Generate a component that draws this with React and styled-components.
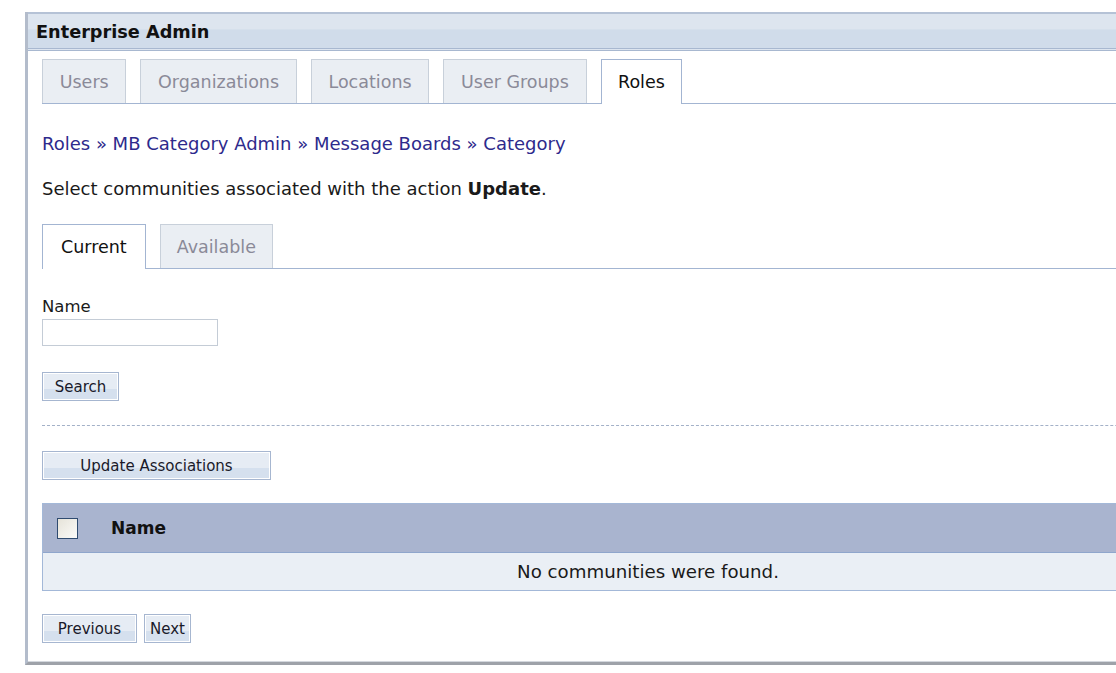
import React from 'react';
import styled, { createGlobalStyle } from 'styled-components';

const GlobalStyle = createGlobalStyle`
  body {
    margin: 0;
    overflow: hidden;
    background: #fff;
    font-family: 'DejaVu Sans', Verdana, sans-serif;
    color: #1a1a1a;
  }
`;

const Page = styled.div`
  padding: 12px 0 0 25px;
  width: 1400px;
`;

const Panel = styled.div`
  width: 1250px;
  border-left: 3px solid #b3bccb;
  border-bottom: 3px solid #9ea2a9;
  background: #fff;
`;

const Header = styled.div`
  height: 34px;
  display: flex;
  align-items: center;
  padding: 1px 0 0 8px;
  box-sizing: border-box;
  border-top: 2px solid #b5c2d6;
  border-bottom: 3px double #a8b8d0;
  background: linear-gradient(#dde5ef 0%, #dde5ef 45%, #d0dcea 46%, #d0dcea 100%);
  font-weight: bold;
  font-size: 17.7px;
  color: #111;
  height: 39px;
`;

const Body = styled.div`
  padding: 8px 0 18px 14px;
  border-bottom: 1px solid #d4d8de;
`;

const TabBar = styled.div`
  display: flex;
  gap: ${(p) => p.gap}px;
  align-items: flex-end;
  border-bottom: 1px solid #a3b5d2;
  margin-bottom: ${(p) => p.below}px;
`;

const Tab = styled.div`
  height: ${(p) => (p.active ? 45 : 44)}px;
  padding: 0 ${(p) => p.pad}px;
  display: flex;
  align-items: center;
  box-sizing: border-box;
  font-size: 17.5px;
  color: ${(p) => (p.active ? '#111' : '#8a8a98')};
  background: ${(p) => (p.active ? '#fff' : '#eaeef3')};
  border: 1px solid ${(p) => (p.active ? '#a3b5d2' : '#c8d0da')};
  border-bottom: none;
  margin-bottom: ${(p) => (p.active ? -1 : 0)}px;
`;

const Crumbs = styled.div`
  font-size: 18px;
  color: #2e2a8c;
  margin-bottom: 24px;
`;

const Intro = styled.div`
  font-size: 18px;
  margin-bottom: 25px;
  b {
    font-weight: bold;
  }
`;

const Label = styled.div`
  font-size: 16.5px;
  margin-bottom: 3px;
`;

const TextInput = styled.input`
  display: block;
  width: 176px;
  height: 27px;
  box-sizing: border-box;
  border: 1px solid #c4ccd6;
  margin: 0 0 26px;
`;

const Button = styled.button`
  display: block;
  width: ${(p) => p.w}px;
  height: 29px;
  padding: 0;
  border: 1px solid #a6b6d0;
  box-shadow: inset 0 0 0 1px #fff;
  background: linear-gradient(#e6ecf4 0%, #e6ecf4 60%, #d5e0ee 61%, #d5e0ee 100%);
  font-family: 'DejaVu Sans', Verdana, sans-serif;
  font-size: 15px;
  color: #1a1a2a;
`;

const Dashed = styled.div`
  border-top: 1px dashed #a3b1c8;
  margin: 24px 0 25px;
`;

const Table = styled.div`
  margin-top: 23px;
  width: 1210px;
  border: 1px solid #a3b8d8;
`;

const HeadRow = styled.div`
  height: 48px;
  display: flex;
  align-items: center;
  background: #a9b4cf;
  border-bottom: 1px solid #8fa6cc;
  font-weight: bold;
  font-size: 17px;
  color: #111;
`;

const Check = styled.span`
  width: 19px;
  height: 19px;
  margin: 0 33px 0 14px;
  border: 1px solid #2f4b70;
  background: linear-gradient(135deg, #e6e3d9, #fbfbf9);
`;

const EmptyRow = styled.div`
  height: 37px;
  display: flex;
  align-items: center;
  justify-content: center;
  background: #eaeff5;
  font-size: 18.2px;
`;

const Pager = styled.div`
  display: flex;
  gap: 7px;
  margin-top: 23px;
`;

export default function App() {
  const top = ['Users', 'Organizations', 'Locations', 'User Groups'];
  return (
    <Page>
      <GlobalStyle />
      <Panel>
        <Header>Enterprise Admin</Header>
        <Body>
          <TabBar gap={14} below={29}>
            {top.map((t) => (
              <Tab key={t} pad={16.7}>
                {t}
              </Tab>
            ))}
            <Tab active pad={16.5}>
              Roles
            </Tab>
          </TabBar>
          <Crumbs>Roles » MB Category Admin » Message Boards » Category</Crumbs>
          <Intro>
            Select communities associated with the action <b>Update</b>.
          </Intro>
          <TabBar gap={14} below={28}>
            <Tab active pad={18}>
              Current
            </Tab>
            <Tab pad={16}>Available</Tab>
          </TabBar>
          <Label>Name</Label>
          <TextInput />
          <Button w={77}>Search</Button>
          <Dashed />
          <Button w={229}>Update Associations</Button>
          <Table>
            <HeadRow>
              <Check />
              Name
            </HeadRow>
            <EmptyRow>No communities were found.</EmptyRow>
          </Table>
          <Pager>
            <Button w={95}>Previous</Button>
            <Button w={47}>Next</Button>
          </Pager>
        </Body>
      </Panel>
    </Page>
  );
}
